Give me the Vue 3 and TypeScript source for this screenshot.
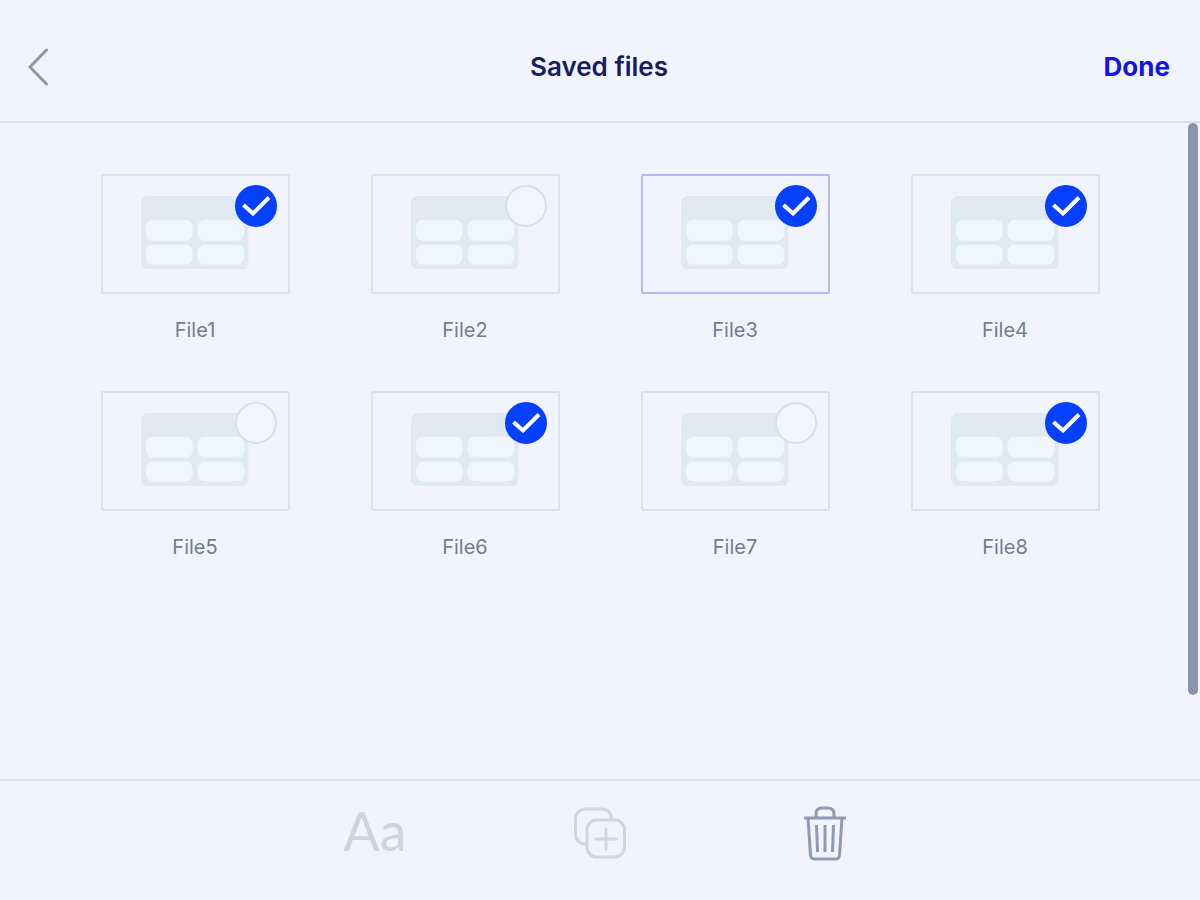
<script setup lang="ts">
import { ref } from 'vue'

interface SavedFile {
  id: number
  name: string
  checked: boolean
}

const focusedId = ref(3)
const files = ref<SavedFile[]>([
  { id: 1, name: 'File1', checked: true },
  { id: 2, name: 'File2', checked: false },
  { id: 3, name: 'File3', checked: true },
  { id: 4, name: 'File4', checked: true },
  { id: 5, name: 'File5', checked: false },
  { id: 6, name: 'File6', checked: true },
  { id: 7, name: 'File7', checked: false },
  { id: 8, name: 'File8', checked: true },
])
</script>

<template>
  <div class="screen">
    <header class="topbar">
      <button class="back" type="button" aria-label="Back">
        <svg width="20" height="38" viewBox="0 0 20 38">
          <path d="M18.5 2 L2 19 L18.5 36" />
        </svg>
      </button>
      <h1 class="title">Saved files</h1>
      <button class="done" type="button">Done</button>
    </header>

    <main class="content">
      <ul class="grid">
        <li v-for="file in files" :key="file.id" class="item">
          <div class="card" :class="{ focused: file.id === focusedId }">
            <svg class="thumb" viewBox="0 0 108 74" aria-hidden="true">
              <rect class="sheet" width="108" height="74" rx="7" />
              <rect class="cell" x="5" y="24" width="47" height="21" rx="7" />
              <rect class="cell" x="57" y="24" width="47" height="21" rx="7" />
              <rect class="cell" x="5" y="49" width="47" height="20" rx="7" />
              <rect class="cell" x="57" y="49" width="47" height="20" rx="7" />
            </svg>
            <div class="mark">
              <input :id="`file-${file.id}`" v-model="file.checked" type="checkbox" />
              <svg v-if="file.checked" viewBox="0 0 42 42" aria-hidden="true">
                <path d="M8.5 20 L18 28.5 L34 12.5" />
              </svg>
            </div>
          </div>
          <label class="name" :for="`file-${file.id}`">{{ file.name }}</label>
        </li>
      </ul>
      <div class="scrollbar"></div>
    </main>

    <footer class="toolbar">
      <button class="tool rename" type="button" aria-label="Rename">Aa</button>
      <button class="tool" type="button" aria-label="Duplicate">
        <svg class="copy" width="54" height="54" viewBox="0 0 54 54">
          <path d="M12.5 38.5 C6 37.5 2.5 33.5 2.5 28 V14 C2.5 7 7 3 14 3 H28 C34 3 38 6.5 39 13" />
          <rect x="14" y="14" width="37.500" height="37" rx="10" />
          <path d="M33 23 V43 M23 33 H43" />
        </svg>
      </button>
      <button class="tool" type="button" aria-label="Delete">
        <svg class="trash" width="42" height="56" viewBox="0 0 42 56">
          <path d="M0 13 H42" />
          <path d="M12 12 V9 C12 5 14 3 18 3 H24 C28 3 30 5 30 9 V12" />
          <path d="M4 13 L6.5 50 C6.7 52.5 8 54 10 54 H32 C34 54 35.3 52.5 35.5 50 L38 13" />
          <path d="M12.5 20 L13.5 47 M21 20 V47 M29.5 20 L28.5 47" />
        </svg>
      </button>
    </footer>
  </div>
</template>

<style>
body {
  margin: 0;
  background: #f1f4ff;
}
</style>

<style scoped>
.screen {
  display: flex;
  flex-direction: column;
  box-sizing: border-box;
  min-height: 100vh;
  background: #f1f4ff;
  font-family: Inter, "Liberation Sans", sans-serif;
}

button {
  padding: 0;
  border: 0;
  background: none;
  font-family: inherit;
  cursor: pointer;
}

svg {
  display: block;
  fill: none;
}

.topbar {
  display: grid;
  grid-template-columns: 1fr auto 1fr;
  align-items: center;
  box-sizing: border-box;
  height: 123px;
  padding: 12px 30px 0 28px;
  border-bottom: 2px solid #dce0ec;
}

.back {
  justify-self: start;
}

.back svg {
  stroke: #8d96aa;
  stroke-width: 3;
  stroke-linecap: round;
}

.title {
  margin: 0;
  color: #14205c;
  font-size: 26px;
  font-weight: 600;
  line-height: 32px;
}

.done {
  justify-self: end;
  color: #1414e6;
  font-size: 26px;
  font-weight: 700;
  line-height: 32px;
}

.content {
  display: flex;
  flex: 1;
}

.grid {
  display: grid;
  flex: 1;
  grid-template-columns: repeat(4, 1fr);
  align-content: start;
  row-gap: 48px;
  margin: 0;
  padding: 51px 48px 48px 60px;
  list-style: none;
}

.item {
  display: flex;
  flex-direction: column;
  align-items: center;
  gap: 24px;
}

.card {
  position: relative;
  display: flex;
  justify-content: center;
  align-items: center;
  box-sizing: border-box;
  width: 70%;
  aspect-ratio: 189 / 120;
  padding-bottom: 3px;
  border: 2px solid #dde1ec;
  border-radius: 2px;
}

.card.focused {
  border-color: #b4b9f6;
}

.thumb {
  width: 58%;
}

.sheet {
  fill: #e0e8f1;
}

.cell {
  fill: #eff6ff;
}

.mark {
  position: absolute;
  top: 9px;
  right: 11px;
  width: 42px;
  height: 42px;
}

.mark input {
  display: block;
  box-sizing: border-box;
  width: 100%;
  height: 100%;
  margin: 0;
  border: 2px solid #d9dfea;
  border-radius: 50%;
  appearance: none;
  background: #f1f5ff;
  cursor: pointer;
}

.mark input:checked {
  border-color: #0540ff;
  background: #0540ff;
}

.mark svg {
  position: absolute;
  inset: 0;
  stroke: #ffffff;
  stroke-width: 4;
  pointer-events: none;
}

.name {
  color: #747c90;
  font-size: 20px;
  line-height: 25px;
}

.scrollbar {
  width: 10px;
  margin: 0 2px 84px 0;
  border-radius: 5px;
  background: #8993ae;
}

.toolbar {
  display: flex;
  justify-content: center;
  box-sizing: border-box;
  height: 121px;
  padding-bottom: 15px;
  border-top: 2px solid #dce0ec;
}

.tool {
  display: flex;
  flex: 0 1 225px;
  justify-content: center;
  align-items: center;
}

.rename {
  padding-bottom: 4px;
  color: #ccd4df;
  font-family: Lato, "Liberation Sans", sans-serif;
  font-size: 54px;
  font-weight: 400;
  line-height: 56px;
}

.copy {
  stroke: #cfd6e1;
  stroke-width: 3;
  stroke-linecap: round;
}

.trash {
  stroke: #8f9ab3;
  stroke-width: 3;
}
</style>
